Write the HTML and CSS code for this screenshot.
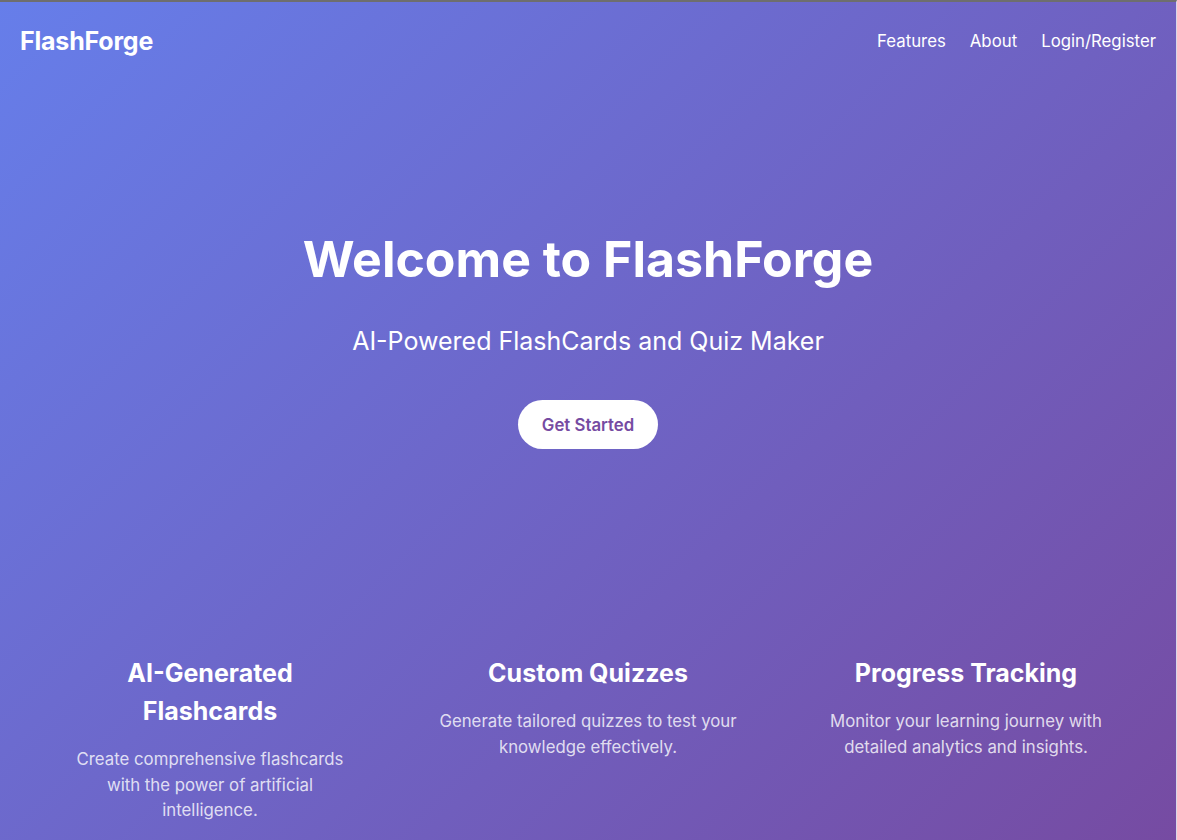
FILE: index.html
```html
<!DOCTYPE html>
<html lang="en">
<head>
<meta charset="utf-8">
<title>FlashForge</title>
<link rel="stylesheet" href="styles.css">
</head>
<body>
<div class="page">
  <nav class="navbar">
    <div class="logo">FlashForge</div>
    <ul class="nav-links">
      <li><a href="#features">Features</a></li>
      <li><a href="#about">About</a></li>
      <li><a href="#login">Login/Register</a></li>
    </ul>
  </nav>
  <header class="hero">
    <h1 class="hero-title">Welcome to FlashForge</h1>
    <p class="hero-subtitle">AI-Powered FlashCards and Quiz Maker</p>
    <a class="cta" href="#start">Get Started</a>
  </header>
  <section class="features" id="features">
    <div class="feature">
      <h3>AI-Generated Flashcards</h3>
      <p>Create comprehensive flashcards with the power of artificial intelligence.</p>
    </div>
    <div class="feature">
      <h3>Custom Quizzes</h3>
      <p>Generate tailored quizzes to test your knowledge effectively.</p>
    </div>
    <div class="feature">
      <h3>Progress Tracking</h3>
      <p>Monitor your learning journey with detailed analytics and insights.</p>
    </div>
  </section>
</div>
</body>
</html>
```
FILE: styles.css
```css
* { box-sizing: border-box; margin: 0; padding: 0; }

html, body { height: 100%; }

body {
  font-family: "Inter", "Open Sans", sans-serif;
  color: #fff;
  background: linear-gradient(135deg, #667eea 0%, #764ba2 100%);
  min-height: 100vh;
  border-top: 2px solid #6e6e6e;
  border-right: 1px solid #d8d8e8;
  overflow: hidden;
}

.page { min-height: 100%; }

.navbar {
  display: flex;
  justify-content: space-between;
  align-items: center;
  padding: 0 20px;
  height: 78px;
}

.logo {
  font-size: 25px;
  font-weight: 700;
  letter-spacing: -0.2px;
}

.nav-links {
  display: flex;
  list-style: none;
  gap: 24px;
}

.nav-links a {
  color: #fff;
  text-decoration: none;
  font-size: 16.8px;
}

.hero {
  display: flex;
  flex-direction: column;
  align-items: center;
  text-align: center;
  padding-top: 149px;
}

.hero-title {
  font-size: 50px;
  font-weight: 700;
  line-height: 60px;
}

.hero-subtitle {
  font-size: 25px;
  font-weight: 400;
  margin-top: 37px;
  line-height: 30px;
}

.cta {
  margin-top: 44px;
  background: #fff;
  color: #764ba2;
  text-decoration: none;
  font-size: 16.8px;
  font-weight: 600;
  height: 49px;
  width: 140px;
  border-radius: 25px;
  display: flex;
  align-items: center;
  justify-content: center;
}

.features {
  display: grid;
  grid-template-columns: repeat(3, 1fr);
  gap: 32px;
  padding: 0 37px;
  margin-top: 205px;
}

.feature {
  text-align: center;
  padding: 0 23px;
}

.feature h3 {
  font-size: 25px;
  font-weight: 700;
  line-height: 38px;
  margin-bottom: 17px;
}

.feature p {
  font-size: 16.8px;
  line-height: 25.6px;
  color: rgba(255, 255, 255, 0.8);
}
```
